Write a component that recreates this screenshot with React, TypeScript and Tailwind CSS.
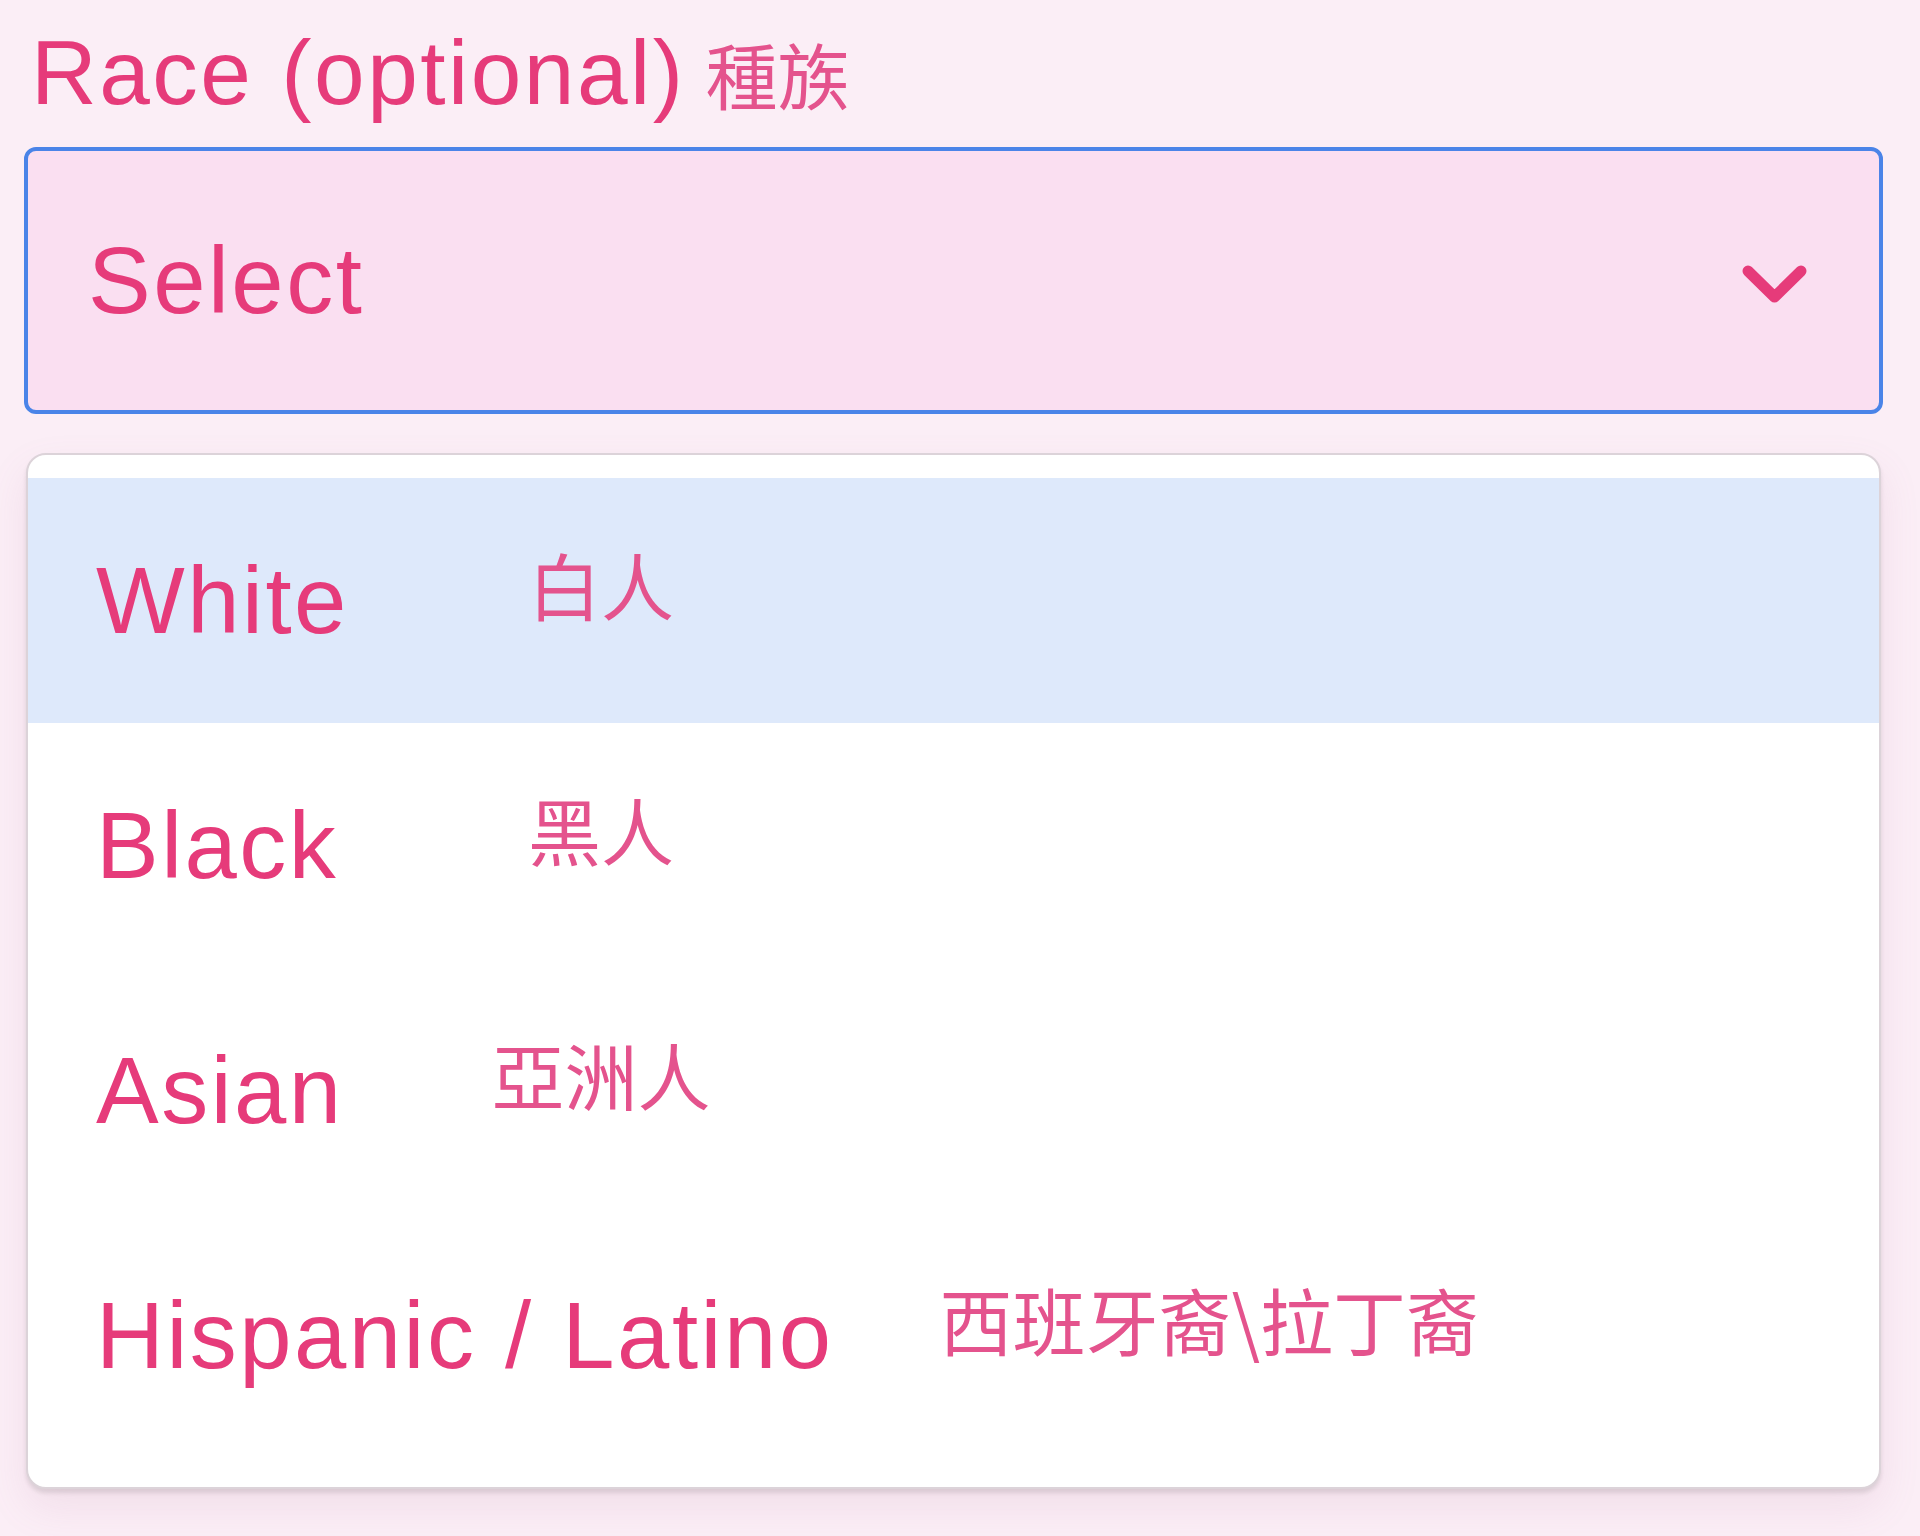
import { useState } from 'react';

interface RaceOption {
  id: string;
  label: string;
  zh: string;
}

const raceOptions: RaceOption[] = [
  { id: 'white', label: 'White', zh: '白人' },
  { id: 'black', label: 'Black', zh: '黑人' },
  { id: 'asian', label: 'Asian', zh: '亞洲人' },
  { id: 'hispanic', label: 'Hispanic / Latino', zh: '西班牙裔\\拉丁裔' }
];

function ChevronDown() {
  return (
    <svg
      xmlns="http://www.w3.org/2000/svg"
      width="70"
      height="45"
      viewBox="0 0 70 45"
      fill="none"
      stroke="currentColor"
      strokeWidth="11"
      strokeLinecap="round"
      strokeLinejoin="round"
      className="text-[#e63b7a] mt-[8px]"
    >
      <path d="M8 9 L34.5 35 L61 9" />
    </svg>
  );
}

export default function App() {
  const [active] = useState('white');

  return (
    <div className="min-h-[1536px] bg-[#fbeef6] pl-[24px] pr-[37px] pt-[27px] font-['Liberation_Sans','Noto_Sans_CJK_TC',sans-serif] text-[#e63b7a]">
      <label className="block pl-[7px] text-[91px] leading-none tracking-[2.5px] whitespace-nowrap">
        Race (optional)<span className="ml-[20px] text-[72px] tracking-normal text-[#e4538d] font-['Noto_Sans_CJK_TC',sans-serif]">種族</span>
      </label>

      <div className="mt-[29px] h-[267px] flex items-center justify-between rounded-[12px] border-[4px] border-[#4a84e8] bg-[#fadff1] pl-[60px] pr-[69px]">
        <span className="text-[94px] tracking-[2.5px]">Select</span>
        <ChevronDown />
      </div>

      <div className="mt-[39px] mx-[2px] rounded-[20px] border-[2px] border-[#dcd3d9] bg-white pt-[23px] pb-[29px] overflow-hidden shadow-[0_4px_4px_rgba(0,0,0,0.10),0_18px_40px_rgba(170,110,150,0.12)]">
        {raceOptions.map((opt) => (
          <div
            key={opt.id}
            className={
              'h-[245px] flex items-center pl-[68px] ' +
              (opt.id === active ? 'bg-[#dee9fb]' : 'bg-white')
            }
          >
            <span className="min-w-[270px] text-[94px] tracking-[2.5px] whitespace-nowrap">
              {opt.label}
            </span>
            <span className="ml-[106px] min-w-[258px] text-center pb-[34px] text-[73px] text-[#e4538d] whitespace-nowrap font-['Noto_Sans_CJK_TC',sans-serif]">
              {opt.zh}
            </span>
          </div>
        ))}
      </div>
    </div>
  );
}
